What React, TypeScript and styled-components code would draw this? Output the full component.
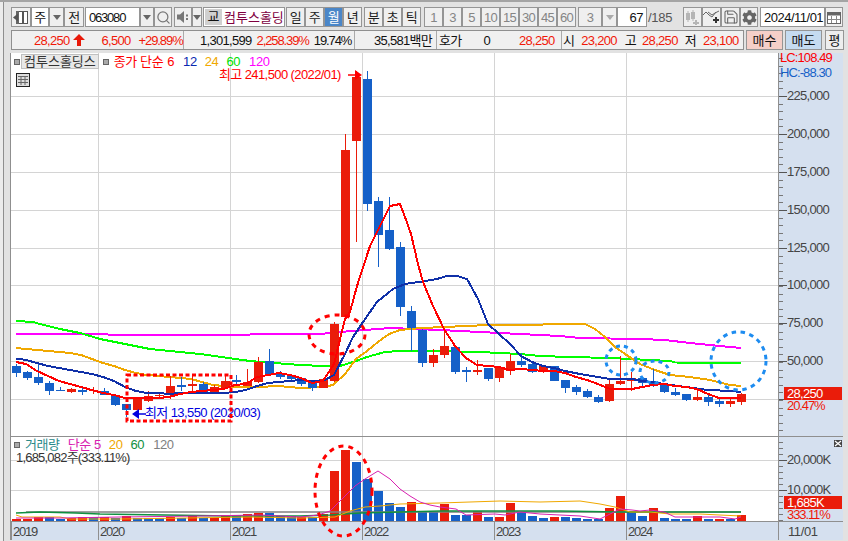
import * as React from 'react';
import styled, { createGlobalStyle } from 'styled-components';
import { Search, Save } from 'lucide-react';
import { FaCog } from 'react-icons/fa';

const RED = '#ea1c0a';
const BLUE = '#1560c8';
const AXIS_BG = '#d5e0ef';
const GRID = '#d4d4d4';

type Candle = [number, number, number, number, 'r' | 'b'];

// body top, body bottom, wick top, wick bottom (page pixels)
const candles: Candle[] = [
    [367, 374, 365, 378, 'b'], [373, 379, 372, 381, 'b'], [378, 384, 363, 386, 'b'], [384, 392, 382, 396, 'b'],
    [391, 392, 388, 392, 'b'], [390, 393, 389, 394, 'r'], [391, 393, 388, 396, 'b'], [391, 392, 388, 395, 'r'],
    [392, 396, 389, 396, 'b'], [396, 406, 396, 407, 'b'], [405, 411, 405, 418, 'b'], [398, 411, 398, 411, 'r'],
    [397, 402, 392, 403, 'r'], [396, 397, 395, 399, 'r'], [387, 396, 377, 400, 'r'], [386, 388, 378, 392, 'b'],
    [385, 387, 377, 392, 'r'], [385, 393, 383, 394, 'b'], [388, 394, 386, 395, 'r'], [382, 389, 377, 390, 'r'],
    [381, 383, 376, 386, 'b'], [383, 387, 370, 387, 'r'], [363, 383, 358, 384, 'r'], [362, 375, 350, 376, 'b'],
    [374, 378, 372, 380, 'b'], [377, 380, 375, 382, 'b'], [379, 385, 378, 387, 'b'], [384, 389, 383, 392, 'b'],
    [380, 389, 379, 389, 'r'], [325, 382, 323, 383, 'r'], [151, 318, 135, 320, 'r'], [78, 142, 72, 243, 'r'],
    [80, 205, 72, 212, 'b'], [202, 236, 198, 268, 'b'], [231, 250, 198, 251, 'b'], [248, 308, 243, 317, 'b'],
    [312, 329, 307, 352, 'b'], [331, 364, 330, 368, 'b'], [356, 364, 350, 368, 'r'], [347, 356, 333, 359, 'r'],
    [348, 373, 348, 375, 'b'], [371, 373, 368, 383, 'b'], [371, 373, 361, 376, 'r'], [369, 380, 369, 382, 'b'],
    [368, 379, 367, 383, 'r'], [362, 372, 355, 376, 'r'], [362, 366, 354, 368, 'b'], [365, 373, 364, 374, 'b'],
    [367, 373, 366, 374, 'r'], [367, 382, 367, 382, 'b'], [381, 389, 381, 394, 'b'], [388, 393, 386, 396, 'b'],
    [392, 398, 390, 399, 'b'], [398, 403, 396, 404, 'b'], [385, 402, 379, 403, 'r'], [382, 385, 357, 386, 'r'],
    [379, 382, 373, 392, 'r'], [379, 384, 379, 388, 'b'], [383, 386, 370, 388, 'b'], [385, 393, 385, 394, 'b'],
    [393, 396, 389, 397, 'b'], [395, 401, 395, 402, 'b'], [398, 401, 389, 402, 'r'], [398, 403, 396, 407, 'b'],
    [402, 405, 400, 408, 'b'], [402, 405, 400, 408, 'r'], [395, 403, 394, 406, 'r'],
];

// top of each volume bar
const volumes: [number, 'r' | 'b'][] = [
    [520, 'r'], [520, 'r'], [518, 'r'], [518, 'b'], [520, 'b'], [519, 'r'], [518, 'r'], [518, 'b'], [518, 'r'],
    [519, 'b'], [517, 'r'], [519, 'b'], [519, 'b'], [519, 'b'], [518, 'r'], [519, 'b'], [517, 'r'], [519, 'b'],
    [519, 'r'], [516, 'r'], [516, 'b'], [515, 'r'], [514, 'r'], [514, 'b'], [517, 'b'], [517, 'b'], [518, 'r'],
    [518, 'b'], [515, 'r'], [472, 'r'], [451, 'r'], [463, 'b'], [480, 'b'], [492, 'b'], [504, 'b'], [508, 'b'],
    [503, 'r'], [513, 'b'], [513, 'b'], [505, 'r'], [516, 'b'], [516, 'b'], [512, 'r'], [518, 'b'], [518, 'r'],
    [504, 'r'], [513, 'b'], [517, 'b'], [519, 'b'], [518, 'r'], [518, 'b'], [519, 'b'], [520, 'b'], [520, 'b'],
    [509, 'r'], [497, 'r'], [513, 'b'], [517, 'b'], [509, 'r'], [519, 'b'], [520, 'b'], [520, 'b'], [517, 'r'],
    [520, 'b'], [520, 'r'], [520, 'b'], [516, 'r'],
];

const ma6 = '16,363 26,365 37,372 48,377 59,382 70,385 81,388 92,391 103,394 114,396 125,399 136,399 147,399 158,399 169,398 180,395 191,393 202,392 213,391 224,390 235,386 246,385 257,378 268,376 279,374 290,376 301,379 312,384 323,382 334,365 345,320 350,313 357,287 370,247 377,233 390,207 400,205 405,218 411,235 418,265 423,283 433,307 444,330 455,347 466,359 477,366 488,367 499,368 510,371 521,370 532,371 543,372 554,372 565,374 576,378 587,381 598,385 610,390 620,390 632,390 642,388 653,386 664,385 675,387 686,388 697,390 708,395 719,399 731,399 741,399';
const ma12 = '16,359.5 26,361 37,364 48,367 59,369 70,371 81,373 92,375 103,378 114,382 125,388 136,392 147,394 158,394 169,395 180,394 191,394 202,394 213,394 224,394 235,393 246,391 257,387 268,384 279,383 290,382 301,381 312,382 323,382 334,376 345,355 353,338 363,323 377,303 393,290 405,285 425,282 437,280 447,277 457,277 467,280 478,300 488,325 499,335 510,345 521,357 532,363 543,367 554,369 565,372 580,375 598,378 610,380 632,380 642,382 653,383 664,385 686,388 708,391 731,392 741,393';
const ma24 = '16,349 37,351 48,352 70,354 81,356 92,360 103,364 114,367 125,371 136,374 147,376 169,378 191,380 202,383 213,386 235,388 257,388 279,387 300,389 323,388 333,386 345,375 356,360 367,352 378,343 389,335 400,331 422,329 444,328 466,327 488,326 510,326 532,326 554,325 585,325 595,330 605,338 615,348 625,355 640,365 655,371 670,376 690,378 710,381 730,386 741,387';
const ma60 = '16,322 33,323 40,325 60,330 80,334 100,340 150,350 200,355 250,362 300,366 323,367 340,367 356,362 367,358 385,353 400,352 440,352 480,353 520,355 540,357 570,358 610,359 670,362 675,363.5 741,364';
const ma120 = '16,335 200,336 300,335 320,335 340,333 390,329 440,331 500,334 560,337 580,339 640,340 665,341 690,344 730,348 741,349';

const vol5 = '16,519 60,519 120,518 200,517 260,516 300,518 318,516 330,512 345,497 355,487 365,480 378,472 390,480 400,490 410,497 420,503 430,506 440,508 456,510 466,516 495,515 505,516 520,513 540,515 560,516 580,517 600,520 610,515 620,510 632,511 640,512 650,511 664,513 675,518 700,518 720,518 735,520 741,518';
const vol20 = '16,516 22,518 60,518 70,520 120,520 250,518 300,519 335,518 340,516 350,512 365,508 380,507 400,505 440,504 470,503 500,502 540,503 580,502 600,505 615,508 630,513 650,513 670,515 700,515 720,516 741,517';
const vol60 = '16,514 40,513 76,514 100,515 165,516 230,517 300,517 330,516 360,514 440,512 490,512 560,512 620,513 741,513';
const vol120 = '26,513 741,513';

const yearLines = [98, 230, 362, 494, 626];
const priceTicks: [number, string][] = [
    [97, '225,000'], [135, '200,000'], [173, '175,000'], [211, '150,000'], [249, '125,000'],
    [286, '100,000'], [324, '75,000'], [362, '50,000'], [400, ''],
];
const years: [number, string][] = [[11, '2019'], [98, '2020'], [230, '2021'], [362, '2022'], [494, '2023'], [626, '2024']];

const barLeft = (i: number) => Math.round(12 + 10.98 * i);

export default function App() {
    return (
        <Page>
            <GlobalStyle />
            <TopBand />
            <Toolbar>
                <Btn $w={20} $ml={11}>
                    <svg width="16" height="15" viewBox="0 0 16 15">
                        <rect x="3.5" y="1.5" width="11" height="12" fill="#fff" stroke="#555" />
                        <rect x="9" y="2" width="2" height="11" fill="#555" />
                        <rect x="3" y="1" width="3" height="13" fill="#666" />
                        <path d="M0 7.5 L5 3.5 V11.5 Z" fill="#555" />
                    </svg>
                </Btn>
                <Field $w={18} $center>주</Field>
                <ArrowBtn $w={15} />
                <Btn $w={20}>전</Btn>
                <Field $w={55} $ml={1} $tight>063080</Field>
                <ArrowBtn $w={14} />
                <Btn $w={18}><Search size={15} color="#777" strokeWidth={2} /></Btn>
                <Btn $w={18} $ml={2}>
                    <svg width="14" height="14" viewBox="0 0 14 14">
                        <path d="M1 4.5 H4 L8 1 V13 L4 9.5 H1 Z" fill="#777" />
                        <rect x="10" y="4.5" width="2" height="2" fill="#777" />
                        <rect x="10" y="8" width="2" height="2" fill="#777" />
                    </svg>
                </Btn>
                <ArrowBtn $w={10} />
                <NameBox>
                    <Market>교</Market>
                    <StockName>컴투스홀딩</StockName>
                </NameBox>
                <Btn $w={19} $ml={1}>일</Btn>
                <Btn $w={19}>주</Btn>
                <Btn $w={19} $active>월</Btn>
                <Btn $w={19}>년</Btn>
                <Btn $w={19} $ml={2}>분</Btn>
                <Btn $w={19}>초</Btn>
                <Btn $w={19}>틱</Btn>
                {['1', '3', '5', '10', '15', '30', '45', '60'].map((t, i) => (
                    <Btn key={t} $w={19} $ml={i === 0 ? 3 : 0} $muted>{t}</Btn>
                ))}
                <Btn $w={24} $ml={2} $muted>3</Btn>
                <ArrowBtn $w={15} $muted />
                <Field $w={30} $right>67</Field>
                <PageCount>/185</PageCount>
                <Btn $w={19} $ml={11}>
                    <svg width="15" height="15" viewBox="0 0 15 15" fill="#b5b5b5">
                        <rect x="1" y="3" width="4" height="7" />
                        <rect x="2.5" y="1" width="1" height="11" />
                        <rect x="6" y="2" width="4" height="7" />
                        <rect x="7.5" y="0" width="1" height="11" />
                        <path d="M10 10 h2 v2 h2 v2 h-2 v1 h-2 v-1 h-2 v-2 h2 Z" />
                    </svg>
                </Btn>
                <Btn $w={19}>
                    <svg width="17" height="15" viewBox="0 0 17 15">
                        <path d="M0 5 L3 2 L6 5 L9 7 L13 2 M5 2 L9 5 L12 3 L16 1" fill="none" stroke="#666" />
                        <path d="M10 9 h2 v-2 h2 v2 h2 v2 h-2 v2 h-2 v-2 h-2 Z" fill="#333" />
                    </svg>
                </Btn>
                <Btn $w={19}><Save size={16} color="#666" strokeWidth={1.6} /></Btn>
                <Btn $w={18}><FaCog size={15} color="#666" /></Btn>
                <Field $w={65} $ml={2}>2024/11/01</Field>
                <Btn $w={18}>
                    <svg width="14" height="13" viewBox="0 0 14 13">
                        <rect x="0.5" y="1.5" width="13" height="11" fill="#fff" stroke="#666" />
                        <rect x="0.5" y="1.5" width="13" height="3" fill="#666" />
                        <path d="M4.5 5 V12 M9.5 5 V12 M1 8.5 H13" stroke="#888" />
                    </svg>
                </Btn>
            </Toolbar>
            <QuoteRow>
                <QuoteBar>
                    <Seg $w={172}>
                        <Val $ml={22} $red>28,250</Val>
                        <UpArrow width="12" height="12" viewBox="0 0 12 12">
                            <path d="M6 0 L12 6 H8 V12 H4 V6 H0 Z" fill="#e81808" />
                        </UpArrow>
                        <Val $ml={17} $red>6,500</Val>
                        <Val $ml={8} $red $tight>+29.89%</Val>
                    </Seg>
                    <Seg $w={171}>
                        <Val $ml={16}>1,301,599</Val>
                        <Val $ml={5} $red $tight>2,258.39%</Val>
                        <Val $ml={5} $tight>19.74%</Val>
                    </Seg>
                    <Seg $w={82}>
                        <Val $ml={19}>35,581백만</Val>
                    </Seg>
                    <Seg $w={125}>
                        <Val $ml={2}>호가</Val>
                        <Val $ml={22}>0</Val>
                        <Val $ml={29} $red>28,250</Val>
                    </Seg>
                    <Seg $w={181} $last>
                        <Val $ml={1}>시</Val>
                        <Val $ml={7} $red>23,200</Val>
                        <Val $ml={8}>고</Val>
                        <Val $ml={6} $red>28,250</Val>
                        <Val $ml={7}>저</Val>
                        <Val $ml={7} $red>23,100</Val>
                    </Seg>
                </QuoteBar>
                <TradeBtn $w={37} $ml={2} $bg="#f5cfc8">매수</TradeBtn>
                <TradeBtn $w={37} $ml={2} $bg="#c5dbf0">매도</TradeBtn>
                <TradeBtn $w={19} $ml={3} $bg="#eeeeee">평</TradeBtn>
            </QuoteRow>
            <Chart>
                <PriceRow>
                    <Pane>
                        <Plot width="767" height="383" viewBox="11 54 767 383">
                            <Grid lines={priceTicks.map((t) => t[0])} y1={54} y2={437} />
                            <MaLine points={ma120} stroke="#ff00ff" />
                            <MaLine points={ma60} stroke="#00ff00" />
                            <MaLine points={ma24} stroke="#f0a800" />
                            {candles.map(([top, bottom, wt, wb, c], i) => (
                                <g key={i} fill={c === 'r' ? RED : BLUE} shapeRendering="crispEdges">
                                    <rect x={barLeft(i) + 4} y={wt} width="1" height={wb - wt} />
                                    <rect x={barLeft(i)} y={top} width="9" height={bottom - top} />
                                </g>
                            ))}
                            <MaLine points={ma12} stroke="#1030a8" />
                            <MaLine points={ma6} stroke="#ff0000" />
                            <path d="M348 76 H358" stroke="#ff0000" strokeWidth="1.5" />
                            <path d="M362 76 L355 71 V81 Z" fill="#ff0000" />
                            <path d="M132 415 L139 410 V420 Z" fill="#0000e0" />
                            <path d="M138 415 H146" stroke="#0000e0" strokeWidth="1.5" />
                        </Plot>
                        <Legend>
                            <Dot />
                            <LegendName>컴투스홀딩스</LegendName>
                            <Dot $ml={4} />
                            <LegendText $c="#ff0000" $ml={5}>종가 단순</LegendText>
                            <LegendText $c="#ff0000" $ml={4}>6</LegendText>
                            <LegendText $c="#0a28b0" $ml={9}>12</LegendText>
                            <LegendText $c="#f0a800" $ml={8}>24</LegendText>
                            <LegendText $c="#00e000" $ml={8}>60</LegendText>
                            <LegendText $c="#ff00ff" $ml={9}>120</LegendText>
                        </Legend>
                        <TableIcon>
                            <svg width="14" height="14" viewBox="0 0 14 14">
                                <rect x="0.5" y="0.5" width="13" height="13" fill="#ddd" stroke="#222" />
                                <path d="M2 3.5 H12 M2 6.5 H12 M2 9.5 H12 M5 3 V12 M9 3 V12" stroke="#666" />
                            </svg>
                        </TableIcon>
                        <Note $l={208} $t={14} $c="#ff0000">최고 241,500 (2022/01)</Note>
                        <Note $l={134} $t={352} $c="#0000e0">최저 13,550 (2020/03)</Note>
                    </Pane>
                    <Axis>
                        <AxisTicks first={54} last={437} majors={priceTicks.map((t) => t[0])} />
                        <LcText $c="#ff0000" $t={-3}>LC:108.49</LcText>
                        <LcText $c="#1560c8" $t={12}>HC:-88.30</LcText>
                        {priceTicks.map(([y, label]) => (
                            <AxisLabel key={y} style={{ top: y - 54 - 8 }}>{label}</AxisLabel>
                        ))}
                        <Price $t={334}>28,250</Price>
                        <AxisRed $t={347}>20.47%</AxisRed>
                    </Axis>
                </PriceRow>
                <VolumeRow>
                    <Pane>
                        <Plot width="767" height="84" viewBox="11 438 767 84">
                            <Grid lines={[461, 491]} y1={438} y2={522} />
                            {volumes.map(([top, c], i) => (
                                <rect key={i} x={barLeft(i)} y={top} width="9" height={522 - top} fill={c === 'r' ? RED : BLUE} shapeRendering="crispEdges" />
                            ))}
                            <polyline points={vol120} fill="none" stroke="#808080" strokeWidth="1.5" />
                            <polyline points={vol60} fill="none" stroke="#109040" strokeWidth="1.5" />
                            <polyline points={vol20} fill="none" stroke="#f0a800" strokeWidth="1" />
                            <polyline points={vol5} fill="none" stroke="#d820b0" strokeWidth="1" />
                        </Plot>
                        <VolumeLegend>
                            <Dot />
                            <LegendText $c="#2a8a8a" $ml={5}>거래량</LegendText>
                            <LegendText $c="#d820b0" $ml={8}>단순 5</LegendText>
                            <LegendText $c="#f0a800" $ml={8}>20</LegendText>
                            <LegendText $c="#109040" $ml={8}>60</LegendText>
                            <LegendText $c="#808080" $ml={9}>120</LegendText>
                        </VolumeLegend>
                        <VolumeInfo>1,685,082주(333.11%)</VolumeInfo>
                    </Pane>
                    <Axis>
                        <AxisTicks first={438} last={522} majors={[461, 491]} />
                        <AxisLabel style={{ top: 461 - 438 - 8 }}>20,000K</AxisLabel>
                        <AxisLabel style={{ top: 491 - 438 - 8 }}>10,000K</AxisLabel>
                        <Price $t={59}>1,685K</Price>
                        <AxisRed $t={72}>333.11%</AxisRed>
                        <CloseIcon>
                            <svg width="8" height="7" viewBox="0 0 8 7">
                                <path d="M1 1 L7 6 M7 1 L1 6" stroke="#fff" strokeWidth="1.2" />
                            </svg>
                        </CloseIcon>
                    </Axis>
                </VolumeRow>
                <DateRow>
                    <Dates>
                        {years.map(([x, label], i) => (
                            <Year key={label} $w={i + 1 < years.length ? years[i + 1][0] - x : 778 - x}>{label}</Year>
                        ))}
                    </Dates>
                    <LastDate>11/01</LastDate>
                </DateRow>
                <Marks width="832" height="487" viewBox="11 54 832 487">
                    <rect x="127" y="376" width="104" height="46" fill="none" stroke="#ff0000" strokeWidth="3" strokeDasharray="4 2.5" />
                    <ellipse cx="337" cy="335.5" rx="28" ry="19.5" fill="none" stroke="#ff0000" strokeWidth="3" strokeDasharray="5 5" />
                    <ellipse cx="343.5" cy="492" rx="28.5" ry="45" fill="none" stroke="#ff0000" strokeWidth="3" strokeDasharray="5 5" />
                    <ellipse cx="621" cy="361.5" rx="15" ry="14.5" fill="none" stroke="#1e8cf0" strokeWidth="3" strokeDasharray="4 4" />
                    <ellipse cx="654.5" cy="373" rx="14.5" ry="11" fill="none" stroke="#1e8cf0" strokeWidth="3" strokeDasharray="4 4" />
                    <ellipse cx="738.5" cy="362" rx="27.5" ry="29" fill="none" stroke="#1e8cf0" strokeWidth="3" strokeDasharray="4.5 4.5" />
                </Marks>
            </Chart>
        </Page>
    );
}

const MaLine = ({ points, stroke }: { points: string; stroke: string }) => (
    <polyline points={points} fill="none" stroke={stroke} strokeWidth="2" shapeRendering="crispEdges" />
);

const Grid = ({ lines, y1, y2 }: { lines: number[]; y1: number; y2: number }) => (
    <g stroke={GRID} shapeRendering="crispEdges">
        {lines.map((y) => <line key={y} x1="11" x2="778" y1={y + 0.5} y2={y + 0.5} />)}
        {yearLines.map((x) => <line key={x} x1={x + 0.5} x2={x + 0.5} y1={y1} y2={y2} />)}
    </g>
);

const AxisTicks = ({ first, last, majors }: { first: number; last: number; majors: number[] }) => {
    const step = (majors[1] - majors[0]) / 5;
    const minors: number[] = [];
    for (let y = majors[0] - step * 10; y < last; y += step) {
        if (y > first) minors.push(y);
    }
    return (
        <TickLayer width="10" height={last - first} viewBox={`0 ${first} 10 ${last - first}`}>
            {minors.map((y) => <line key={y} x1="0" x2="4" y1={Math.round(y) + 0.5} y2={Math.round(y) + 0.5} stroke="#777" />)}
            {majors.map((y) => <line key={y} x1="0" x2="8" y1={y + 0.5} y2={y + 0.5} stroke="#555" />)}
        </TickLayer>
    );
};

const GlobalStyle = createGlobalStyle`
    html, body {
        margin: 0;
        padding: 0;
        background: #e2e2e2;
    }
    body {
        font-family: "Liberation Sans", "Noto Sans CJK KR", sans-serif;
        font-size: 13px;
        line-height: 15px;
    }
`;

const Page = styled.div`
    width: 848px;
    height: 541px;
    overflow: hidden;
    background: #e2e2e2;
    box-sizing: border-box;
    display: flex;
    flex-direction: column;
    box-shadow: inset 3px 0 0 #ececec, inset 4px 0 0 #8f8f8f;
`;

const TopBand = styled.div`
    height: 2px;
    margin-bottom: 5px;
    background: #a4a4a4;
`;

const Toolbar = styled.div`
    display: flex;
    height: 20px;
    align-items: stretch;
`;

const Btn = styled.div<{ $w: number; $ml?: number; $active?: boolean; $muted?: boolean }>`
    box-sizing: border-box;
    width: ${(p) => p.$w}px;
    margin-left: ${(p) => p.$ml || 0}px;
    display: flex;
    align-items: center;
    justify-content: center;
    border: 1px solid #959595;
    background: ${(p) => (p.$active ? '#4a86c8' : '#efefef')};
    color: ${(p) => (p.$active ? '#fff' : p.$muted ? '#858585' : '#222')};
    letter-spacing: -0.7px;
`;

const Caret = styled.span<{ $muted?: boolean }>`
    width: 0;
    height: 0;
    border-left: 4px solid transparent;
    border-right: 4px solid transparent;
    border-top: 5px solid ${(p) => (p.$muted ? '#aaa' : '#666')};
`;

const ArrowBtn = ({ $w, $muted }: { $w: number; $muted?: boolean }) => (
    <Btn $w={$w}><Caret $muted={$muted} /></Btn>
);

const Field = styled.div<{ $w: number; $ml?: number; $center?: boolean; $right?: boolean; $tight?: boolean }>`
    box-sizing: border-box;
    width: ${(p) => p.$w}px;
    margin-left: ${(p) => p.$ml || 0}px;
    display: flex;
    align-items: center;
    justify-content: ${(p) => (p.$center ? 'center' : p.$right ? 'flex-end' : 'flex-start')};
    padding: 0 ${(p) => (p.$center ? 0 : 3)}px;
    background: #fff;
    border: 1px solid #959595;
    color: #111;
    letter-spacing: ${(p) => (p.$tight ? -1.2 : -0.5)}px;
    white-space: nowrap;
`;

const NameBox = styled.div`
    box-sizing: border-box;
    width: 82px;
    margin-left: 1px;
    display: flex;
    align-items: center;
    background: #fff;
    border: 1px solid #959595;
    padding-left: 1px;
`;

const Market = styled.span`
    width: 17px;
    height: 16px;
    line-height: 16px;
    text-align: center;
    background: #d0d0d0;
    color: #111;
`;

const StockName = styled.span`
    margin-left: 2px;
    color: #800040;
    white-space: nowrap;
`;

const PageCount = styled.span`
    box-sizing: border-box;
    width: 24px;
    margin-left: 1px;
    display: flex;
    align-items: center;
    color: #555;
    letter-spacing: -0.3px;
`;

const QuoteRow = styled.div`
    display: flex;
    height: 20px;
    margin: 3px 0 3px 11px;
`;

const QuoteBar = styled.div`
    display: flex;
    box-sizing: border-box;
    width: 733px;
    border: 1px solid #8f8f8f;
    background: #f0f0f0;
`;

const Seg = styled.div<{ $w: number; $last?: boolean }>`
    box-sizing: border-box;
    width: ${(p) => p.$w}px;
    display: flex;
    align-items: center;
    white-space: nowrap;
    border-right: ${(p) => (p.$last ? 'none' : '1px solid #aaa')};
`;

const Val = styled.span<{ $ml?: number; $red?: boolean; $tight?: boolean }>`
    margin-left: ${(p) => p.$ml || 0}px;
    color: ${(p) => (p.$red ? '#f01808' : '#111')};
    letter-spacing: ${(p) => (p.$tight ? -1.1 : -0.7)}px;
`;

const UpArrow = styled.svg`
    margin-left: 3px;
`;

const TradeBtn = styled.div<{ $w: number; $ml: number; $bg: string }>`
    box-sizing: border-box;
    width: ${(p) => p.$w}px;
    margin-left: ${(p) => p.$ml}px;
    display: flex;
    align-items: center;
    justify-content: center;
    background: ${(p) => p.$bg};
    border: 1px solid #959595;
    color: #111;
`;

const Chart = styled.div`
    position: relative;
    width: 832px;
    margin-left: 10px;
    border-left: 1px solid #8f8f8f;
    display: flex;
    flex-direction: column;
`;

const PriceRow = styled.div`
    display: flex;
    height: 383px;
`;

const VolumeRow = styled.div`
    display: flex;
    height: 85px;
    border-top: 1px solid #8f8f8f;
    box-sizing: border-box;
`;

const Pane = styled.div`
    position: relative;
    width: 767px;
    background: #fff;
    overflow: hidden;
`;

const Plot = styled.svg`
    display: block;
`;

const Axis = styled.div`
    position: relative;
    flex: 1;
    background: ${AXIS_BG};
    border-left: 1px solid #8f8f8f;
    color: #444;
`;

const TickLayer = styled.svg`
    position: absolute;
    left: 0;
    top: 0;
`;

const Legend = styled.div`
    position: absolute;
    left: 3px;
    top: 1px;
    display: flex;
    align-items: center;
    height: 15px;
`;

const VolumeLegend = styled(Legend)`
    top: 2px;
    height: 12px;
    line-height: 12px;
`;

const Dot = styled.span<{ $ml?: number }>`
    width: 4px;
    height: 4px;
    margin-left: ${(p) => p.$ml || 0}px;
    background: #aaa;
    border: 1px solid #666;
`;

const LegendName = styled.span`
    box-sizing: border-box;
    height: 15px;
    margin-left: 1px;
    padding: 0 2px;
    line-height: 13px;
    background: #e8e8e8;
    border: 1px solid #c0c0c0;
    color: #333;
    white-space: nowrap;
`;

const LegendText = styled.span<{ $c: string; $ml?: number }>`
    margin-left: ${(p) => p.$ml || 0}px;
    color: ${(p) => p.$c};
    white-space: nowrap;
    letter-spacing: -0.4px;
`;

const TableIcon = styled.div`
    position: absolute;
    left: 5px;
    top: 20px;
    line-height: 0;
`;

const Note = styled.span<{ $l: number; $t: number; $c: string }>`
    position: absolute;
    left: ${(p) => p.$l}px;
    top: ${(p) => p.$t}px;
    color: ${(p) => p.$c};
    white-space: nowrap;
    letter-spacing: -0.6px;
`;

const VolumeInfo = styled.span`
    position: absolute;
    left: 5px;
    top: 15px;
    line-height: 12px;
    color: #333;
    white-space: nowrap;
    letter-spacing: -0.8px;
`;

const LcText = styled.span<{ $c: string; $t: number }>`
    position: absolute;
    left: 1px;
    top: ${(p) => p.$t}px;
    color: ${(p) => p.$c};
    letter-spacing: -0.9px;
    white-space: nowrap;
`;

const AxisLabel = styled.span`
    position: absolute;
    left: 8px;
    color: #444;
    white-space: nowrap;
    letter-spacing: -0.7px;
`;

const Price = styled.span<{ $t: number }>`
    position: absolute;
    left: 5px;
    top: ${(p) => p.$t}px;
    width: 58px;
    height: 13px;
    line-height: 13px;
    padding-left: 3px;
    box-sizing: border-box;
    background: ${RED};
    color: #fff;
    letter-spacing: -0.7px;
`;

const AxisRed = styled.span<{ $t: number }>`
    position: absolute;
    left: 8px;
    top: ${(p) => p.$t}px;
    color: #f01808;
    white-space: nowrap;
    line-height: 11px;
    letter-spacing: -1.1px;
`;

const CloseIcon = styled.span`
    position: absolute;
    left: 55px;
    top: 3px;
    width: 8px;
    height: 7px;
    line-height: 0;
    background: #444;
`;

const DateRow = styled.div`
    display: flex;
    height: 19px;
    background: ${AXIS_BG};
    border-top: 1px solid #8f8f8f;
    box-sizing: border-box;
    letter-spacing: -1.2px;
`;

const Dates = styled.div`
    width: 767px;
    display: flex;
`;

const Year = styled.span<{ $w: number }>`
    box-sizing: border-box;
    width: ${(p) => p.$w}px;
    padding-left: 1px;
    border-left: 1px solid #8f8f8f;
    color: #444;
    line-height: 19px;
`;

const LastDate = styled.span`
    flex: 1;
    padding-left: 9px;
    border-left: 1px solid #8f8f8f;
    color: #444;
    line-height: 19px;
    letter-spacing: -0.4px;
`;

const Marks = styled.svg`
    position: absolute;
    left: 0;
    top: 0;
    pointer-events: none;
`;
